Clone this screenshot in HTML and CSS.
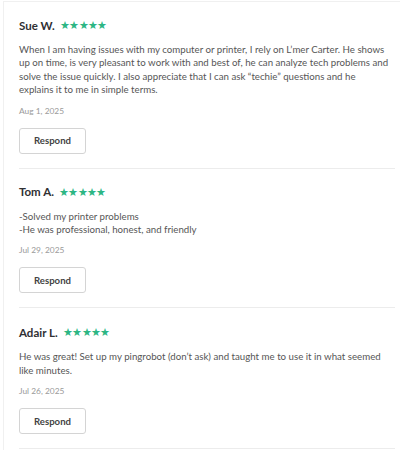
FILE: index.html
```html
<!DOCTYPE html>
<html>
<head>
<meta charset="utf-8">
<link rel="stylesheet" href="styles.css">
</head>
<body>
<div class="panel">
  <div class="review">
    <div class="head"><span class="name">Sue W.</span><span class="stars">★★★★★</span></div>
    <p class="text">When I am having issues with my computer or printer, I rely on L’mer Carter. He shows up on time, is very pleasant to work with and best of, he can analyze tech problems and solve the issue quickly. I also appreciate that I can ask “techie” questions and he explains it to me in simple terms.</p>
    <div class="date">Aug 1, 2025</div>
    <button class="respond">Respond</button>
  </div>
  <div class="review">
    <div class="head"><span class="name">Tom A.</span><span class="stars">★★★★★</span></div>
    <p class="text">-Solved my printer problems<br>-He was professional, honest, and friendly</p>
    <div class="date">Jul 29, 2025</div>
    <button class="respond">Respond</button>
  </div>
  <div class="review">
    <div class="head"><span class="name">Adair L.</span><span class="stars">★★★★★</span></div>
    <p class="text">He was great! Set up my pingrobot (don’t ask) and taught me to use it in what seemed like minutes.</p>
    <div class="date">Jul 26, 2025</div>
    <button class="respond">Respond</button>
  </div>
</div>
</body>
</html>
```
FILE: styles.css
```css
html, body { margin: 0; padding: 0; background: #fff; }
body { font-family: Lato, "Open Sans", sans-serif; color: #4a4a4a; }
.panel {
  margin-left: 3px;
  margin-top: 1px;
  width: 397px;
  border-left: 1px solid #f0f0f0;
  border-top: 1px solid #f0f0f0;
  padding: 0 5px 0 15px;
  box-sizing: border-box;
  height: 449px;
}
.review {
  border-bottom: 1px solid #ececec;
  padding: 15px 0 14px;
}
.review + .review { padding-top: 15px; }
.review:last-child { padding-top: 16px; }
.head { display: flex; align-items: center; gap: 5px; height: 16px; }
.name { font-weight: 700; font-size: 11.5px; color: #2f3033; }
.stars { color: #2db683; font-size: 10.5px; letter-spacing: -0.6px; }
.text {
  margin: 10px 0 0;
  width: 371px;
  font-size: 9.7px;
  line-height: 13.4px;
  color: #565656;
}
.date { margin-top: 9px; font-size: 8.4px; line-height: 11px; color: #9a9a9a; }
.respond {
  display: block;
  margin-top: 11px;
  width: 67px;
  height: 26px;
  background: #fff;
  border: 1px solid #d4d4d4;
  border-radius: 3px;
  font-family: Lato, sans-serif;
  font-weight: 700;
  font-size: 9.6px;
  color: #444;
  padding: 0;
}
```
